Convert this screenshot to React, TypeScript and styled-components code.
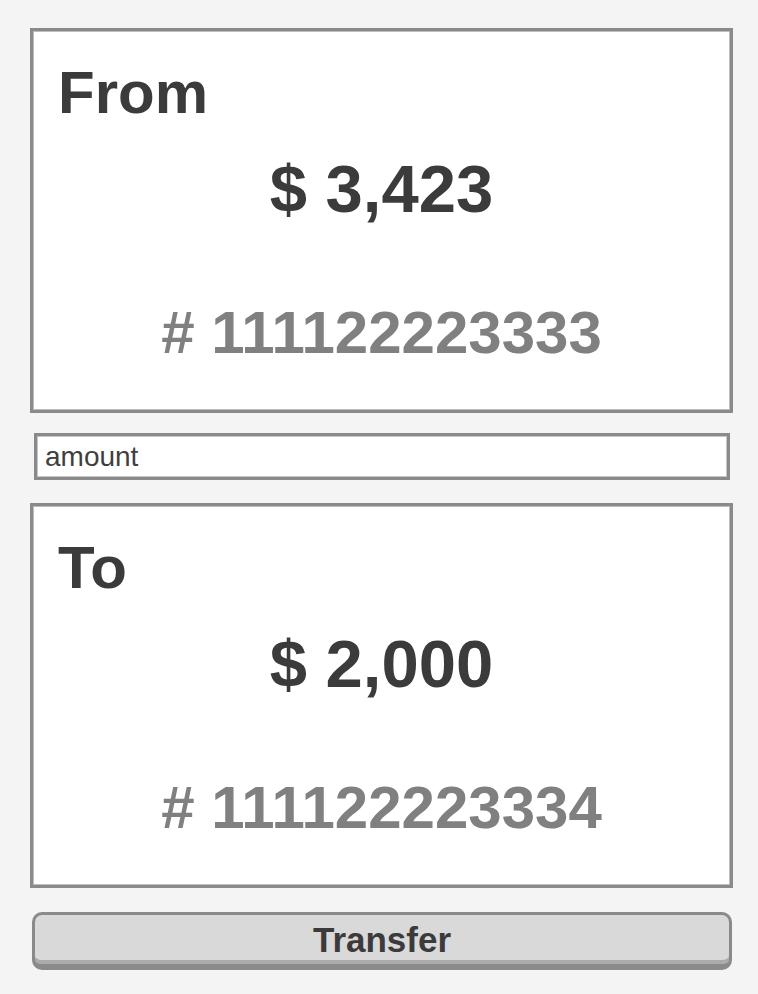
import styled, { createGlobalStyle } from 'styled-components';
import { useState } from 'react';

const GlobalStyle = createGlobalStyle`
  body {
    margin: 0;
    background: #f4f4f4;
    font-family: 'Liberation Sans', Arial, sans-serif;
  }
`;

const Page = styled.div`
  display: flex;
  flex-direction: column;
  width: 703px;
  padding: 28px 0 0 30px;
`;

const Card = styled.section`
  display: flex;
  flex-direction: column;
  background: #ffffff;
  border: 3px solid #8a8a8a;
  box-shadow: inset 0 0 0 1px #bdbdbd;
  padding: 32px 4px 47px 25px;
`;

const Label = styled.h2`
  margin: 0;
  font-size: 60px;
  line-height: 1;
  font-weight: 700;
  color: #3b3b3b;
`;

const Balance = styled.div`
  margin-top: 32px;
  font-size: 67px;
  line-height: 1;
  font-weight: 700;
  color: #3b3b3b;
  text-align: center;
  margin-right: 21px;
`;

const Account = styled.div`
  margin-top: 81px;
  font-size: 60px;
  line-height: 1;
  font-weight: 700;
  color: #808080;
  text-align: center;
  margin-right: 21px;
`;

const AmountInput = styled.input`
  box-sizing: border-box;
  height: 47px;
  margin: 20px 3px 23px 4px;
  padding: 0 8px;
  border: 3px solid #8a8a8a;
  box-shadow: inset 0 0 0 1px #c6c6c6;
  background: #ffffff;
  font-family: 'Liberation Sans', Arial, sans-serif;
  font-size: 28px;
  color: #3f3f3f;
  outline: none;
  &::placeholder {
    color: #3f3f3f;
    opacity: 1;
  }
`;

const TransferButton = styled.button`
  box-sizing: border-box;
  height: 58px;
  margin: 24px 1px 0 2px;
  padding: 6px 0 6px;
  border: 3px solid #8a8a8a;
  border-bottom-width: 6px;
  border-radius: 10px;
  box-shadow: inset 0 -4px 0 #ababab;
  background: #d9d9d9;
  font-family: 'Liberation Sans', Arial, sans-serif;
  font-size: 35px;
  line-height: 1;
  font-weight: 700;
  color: #3b3b3b;
  cursor: pointer;
`;

interface IAccount {
  label: string;
  balance: string;
  number: string;
}

const from: IAccount = { label: 'From', balance: '$ 3,423', number: '# 111122223333' };
const to: IAccount = { label: 'To', balance: '$ 2,000', number: '# 111122223334' };

function AccountCard({ account }: { account: IAccount }) {
  return (
    <Card>
      <Label>{account.label}</Label>
      <Balance>{account.balance}</Balance>
      <Account>{account.number}</Account>
    </Card>
  );
}

export default function App() {
  const [amount, setAmount] = useState('');

  return (
    <>
      <GlobalStyle />
      <Page>
        <AccountCard account={from} />
        <AmountInput placeholder="amount" value={amount} onChange={(e) => setAmount(e.target.value)} />
        <AccountCard account={to} />
        <TransferButton>Transfer</TransferButton>
      </Page>
    </>
  );
}
